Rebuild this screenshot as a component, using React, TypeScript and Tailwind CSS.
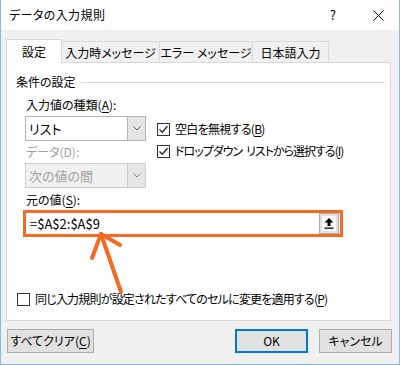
const font = "font-['Noto_Sans_CJK_JP','Noto_Sans',sans-serif] [font-feature-settings:'palt']";

function Check({ checked }: { checked?: boolean }) {
  return (
    <span className="flex h-[13px] w-[13px] shrink-0 items-center justify-center border border-[#333333] bg-white">
      {checked && (
        <svg width="11" height="11" viewBox="0 0 11 11" fill="none">
          <path d="M1.5 5.5 L4.2 8.2 L9.5 2.2" stroke="#222222" strokeWidth="1.3" />
        </svg>
      )}
    </span>
  );
}

function Combo({ value, disabled }: { value: string; disabled?: boolean }) {
  return (
    <div
      className={`flex h-[25px] w-[121px] items-stretch border ${
        disabled ? "border-[#cccccc] bg-[#f0f0f0]" : "border-[#b4b4b4] bg-white"
      }`}
    >
      <span className={`flex flex-1 items-center pl-[3px] text-[13px] ${disabled ? "text-[#a0a0a0]" : "text-black"}`}>
        {value}
      </span>
      <span
        className={`flex w-[18px] items-center justify-center border-l ${
          disabled ? "border-[#cccccc] bg-[#e6e6e6]" : "border-[#b4b4b4] bg-[#e5e5e5]"
        }`}
      >
        <svg width="8" height="5" viewBox="0 0 8 5" fill="none">
          <path d="M0.5 0.5 L4 4 L7.5 0.5" stroke={disabled ? "#8a8a8a" : "#606060"} strokeWidth="1" />
        </svg>
      </span>
    </div>
  );
}

function Key({ k }: { k: string }) {
  return (
    <>
      (<span className="underline underline-offset-2">{k}</span>)
    </>
  );
}

export default function App() {
  return (
    <div className={`relative flex h-[365px] w-[400px] flex-col whitespace-nowrap border-x border-b border-[#86b8e8] bg-[#f0f0f0] text-[12px] leading-4 text-black ${font}`}>
      {/* Title bar */}
      <div className="flex h-[30px] items-center bg-white pl-[8px]">
        <span className="flex-1 text-[12px] tracking-[0.4px]">データの入力規則</span>
        <span className="mr-[37px] text-[13px]">?</span>
        <svg className="mr-[15px]" width="11" height="11" viewBox="0 0 11 11" fill="none">
          <path d="M0.5 0.5 L10.5 10.5 M10.5 0.5 L0.5 10.5" stroke="#111111" strokeWidth="1" />
        </svg>
      </div>

      {/* Tabs */}
      <div className="ml-[5px] mt-[9px] flex h-[24px] items-end">
        <div className="relative z-10 flex h-[24px] w-[56px] items-center justify-center border-x border-t border-[#d9d9d9] bg-white">
          設定
        </div>
        <div className="flex h-[22px] w-[98px] items-center justify-center border-r border-t border-[#d9d9d9]">
          入力時メッセージ
        </div>
        <div className="flex h-[22px] w-[93px] items-center justify-center border-r border-t border-[#d9d9d9]">
          エラー メッセージ
        </div>
        <div className="flex h-[22px] w-[76px] items-center justify-center border-r border-t border-[#d9d9d9]">
          日本語入力
        </div>
      </div>

      {/* Panel */}
      <div className="ml-[5px] mt-[-1px] flex h-[259px] w-[385px] flex-col border border-[#d9d9d9] bg-white">
        <div className="mr-[5px] mt-[11px] flex items-center pl-[9px]">
          <span>条件の設定</span>
          <span className="ml-[5px] h-px flex-1 bg-[#dcdcdc]" />
        </div>

        <div className="ml-[18px] mt-[7px] flex">
          <div className="flex w-[121px] flex-col">
            <span className="pl-px">
              入力値の種類<Key k="A" />:
            </span>
            <div className="mt-[3px]">
              <Combo value="リスト" />
            </div>
            <span className="mt-[3px] pl-px text-[#a0a0a0]">データ(D):</span>
            <div className="mt-[3px]">
              <Combo value="次の値の間" disabled />
            </div>
          </div>
          <div className="ml-[11px] flex flex-col gap-[6px] pt-[24px]">
            <div className="flex items-center gap-[5px]">
              <Check checked />
              <span className="tracking-[-0.7px]">
                空白を無視する<Key k="B" />
              </span>
            </div>
            <div className="flex items-center gap-[5px]">
              <Check checked />
              <span className="tracking-[-1px]">
                ドロップダウン<span className="ml-[4px]">リストから選択する<Key k="I" /></span>
              </span>
            </div>
          </div>
        </div>

        <span className="ml-[19px] mt-[4px]">
          元の値<Key k="S" />:
        </span>
        <div className="ml-[16px] mt-[2px] flex h-[27px] w-[320px] items-stretch border-[3px] border-[#f26b24] bg-white">
          <span className="flex flex-1 items-center pl-[4px] text-[13px]">=$A$2:$A$9</span>
          <span className="mr-px flex w-[20px] items-center justify-center border border-[#adadad] bg-[#e1e1e1]">
            <span className="flex h-[15px] w-[14px] items-center justify-center bg-white">
              <svg width="10" height="11" viewBox="0 0 10 11">
                <path d="M5 0 L9.5 4.5 L6.5 4.5 L6.5 8 L3.5 8 L3.5 4.5 L0.5 4.5 Z" fill="#000000" />
                <rect x="0.5" y="9.5" width="9" height="1.3" fill="#000000" />
              </svg>
            </span>
          </span>
        </div>

        <div className="ml-[10px] mt-[54px] flex items-center gap-[5px]">
          <Check />
          <span className="tracking-[-0.8px]">
            同じ入力規則が設定されたすべてのセルに変更を適用する<Key k="P" />
          </span>
        </div>
      </div>

      {/* Buttons */}
      <div className="mt-[8px] flex items-center px-[6px] pr-[7px]">
        <button className="flex h-[24px] w-[87px] items-center justify-center border border-[#adadad] bg-[#e1e1e1]">
          すべてクリア<Key k="C" />
        </button>
        <div className="flex-1" />
        <button className="flex h-[24px] w-[73px] items-center justify-center border-2 border-[#0078d7] bg-[#e1e1e1]">
          OK
        </button>
        <button className="ml-[11px] flex h-[24px] w-[73px] items-center justify-center border border-[#adadad] bg-[#e1e1e1]">
          キャンセル
        </button>
      </div>

      {/* Annotation arrow */}
      <svg className="pointer-events-none absolute left-0 top-0" width="400" height="365" viewBox="0 0 400 365" fill="none">
        <path d="M100 234 L120 292" stroke="#f26b24" strokeWidth="4" strokeLinecap="round" />
        <path d="M91 258 L100 234 L119 245" stroke="#f26b24" strokeWidth="4" strokeLinecap="round" strokeLinejoin="round" />
      </svg>
    </div>
  );
}
